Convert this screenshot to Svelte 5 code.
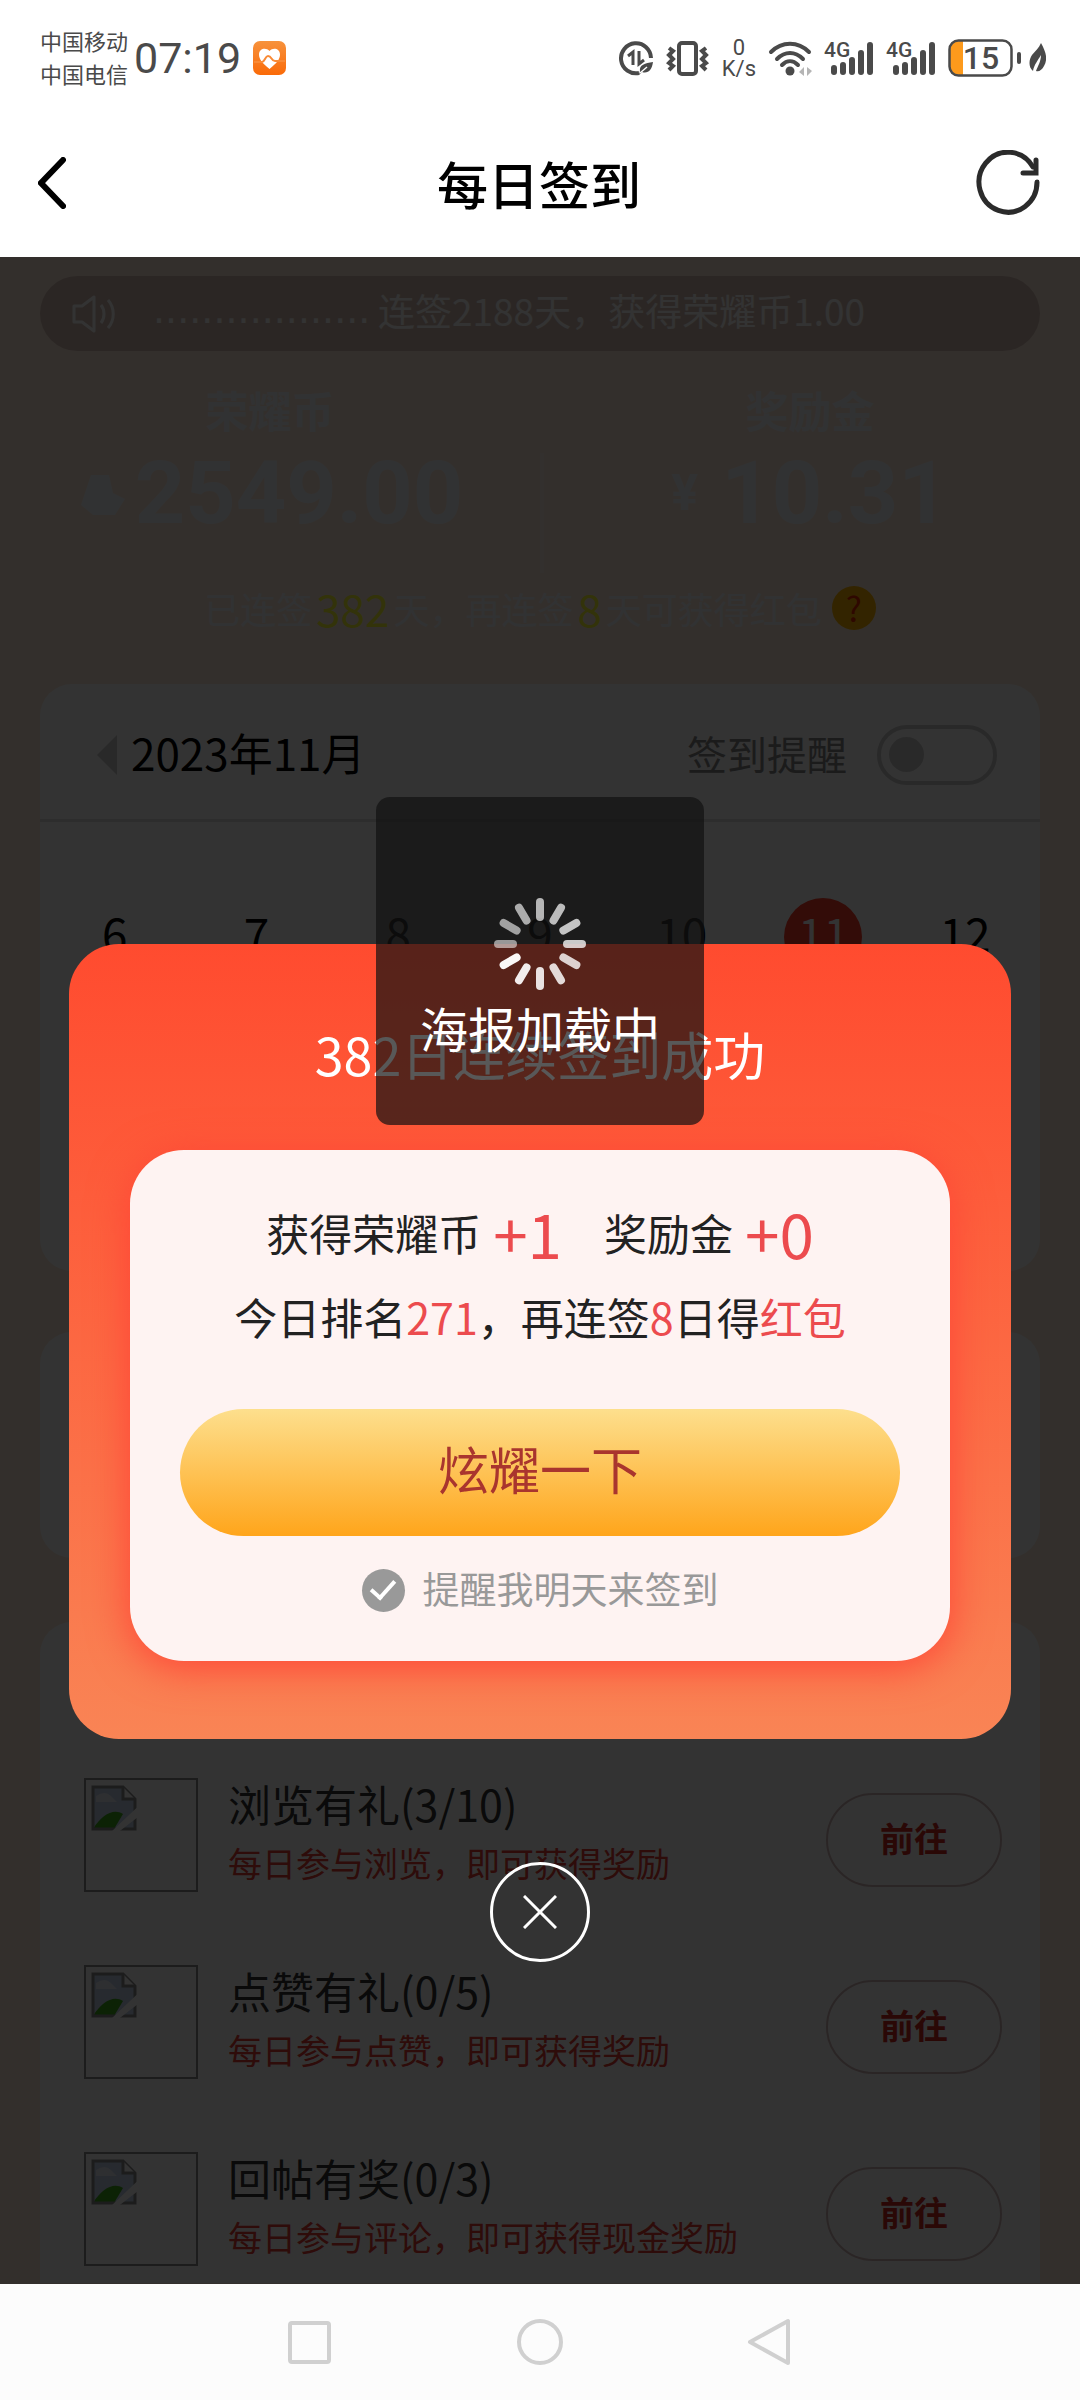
<script lang="ts">
  const notice = '连签2188天，获得荣耀币1.00';
  const days = [6, 7, 8, 9, 10, 11, 12];
  const today = 11;
  const tasks = [
    { name: '浏览有礼(3/10)', desc: '每日参与浏览，即可获得奖励' },
    { name: '点赞有礼(0/5)', desc: '每日参与点赞，即可获得奖励' },
    { name: '回帖有奖(0/3)', desc: '每日参与评论，即可获得现金奖励' }
  ];
  // opacity per spoke, clockwise from the top
  const spokes = [0.68, 0.71, 0.74, 0.77, 0.8, 0.83, 0.87, 0.92, 0.97, 0.55, 0.59, 0.64];

  let remind = $state(false);
  let remindTomorrow = $state(true);
</script>

{#snippet signal()}
  <svg class="signal" width="50" height="44" viewBox="0 -4 50 44" aria-hidden="true">
    <text class="net" x="0" y="17">4G</text>
    <g stroke="#4a4a4a" stroke-width="6" stroke-linecap="round">
      <path d="M10 28v4M19 25v7M28 20v12M37 13v19M46 5v27" />
    </g>
  </svg>
{/snippet}

<div class="page">
  <div class="status">
    <div class="carriers">
      <span>中国移动</span>
      <span>中国电信</span>
    </div>
    <span class="clock">07:19</span>
    <svg width="33" height="34" viewBox="0 0 33 34" aria-hidden="true">
      <defs>
        <linearGradient id="health" x1="0" y1="0" x2="0" y2="1">
          <stop offset="0" stop-color="#f7923c" />
          <stop offset="1" stop-color="#fa6a08" />
        </linearGradient>
      </defs>
      <rect width="33" height="34" rx="7" fill="url(#health)" />
      <path d="M16.500 28C9 22 6 18 6 13.500C6 7.500 13 6 16.500 10C20 6 27 7.500 27 13.500C27 18 24 22 16.500 28Z" fill="#fff" />
      <path d="M1 21H9C12 21 12 15 15 15C19 15 18 20 22 20H32" fill="none" stroke="#f98a35" stroke-width="2" />
    </svg>

    <div class="indicators">
      <svg width="36" height="36" viewBox="0 0 36 36" aria-hidden="true">
        <path d="M21 33A15 15 0 1 1 33 18" fill="none" stroke="#4a4a4a" stroke-width="4" />
        <path d="M10 16l5-4v13M21 11v13l5-4" fill="none" stroke="#4a4a4a" stroke-width="3" />
        <path d="M22 31C21 25 27 23 35 22C34 30 30 34 24 32L21 35Z" fill="#4a4a4a" />
        <path d="M22 33l7-6" stroke="#fff" stroke-width="1.500" />
      </svg>
      <svg width="44" height="36" viewBox="0 0 44 36" aria-hidden="true">
        <rect x="13" y="3" width="17" height="31" rx="3" fill="none" stroke="#4a4a4a" stroke-width="4" />
        <path d="M3 8l4 3-4 4 4 4-4 4 4 3-4 4M40 8l-4 3 4 4-4 4 4 4-4 3 4 4" fill="none" stroke="#4a4a4a" stroke-width="4" />
      </svg>
      <div class="speed">
        <span>0</span>
        <span>K/s</span>
      </div>
      <svg width="44" height="36" viewBox="0 0 44 36" aria-hidden="true">
        <g fill="none" stroke="#4a4a4a" stroke-width="4" stroke-linecap="round">
          <path d="M3 12C14 1 30 1 41 12" />
          <path d="M9 19C17 11 27 11 35 19" />
          <path d="M14 25C19 20 25 20 30 25" />
        </g>
        <circle cx="22" cy="31" r="4.500" fill="#4a4a4a" />
        <path d="M31 32l5-5v9M39 27v9l5-5" fill="#b5b5b5" />
      </svg>
      {@render signal()}
      {@render signal()}
      <svg width="73" height="38" viewBox="0 0 73 38" aria-hidden="true">
        <path d="M15 2H11A9 9 0 0 0 2 11V27A9 9 0 0 0 11 36H15Z" fill="#fd9a1c" />
        <rect x="1.500" y="1.500" width="62" height="35" rx="9" fill="none" stroke="#4a4a4a" stroke-width="2.500" />
        <rect x="69" y="13" width="4" height="12" rx="2" fill="#4a4a4a" />
        <text class="charge" x="33" y="30" text-anchor="middle">15</text>
      </svg>
      <svg class="leaf" width="17" height="30" viewBox="0 0 17 30" aria-hidden="true">
        <path d="M12 0C17 9 19 16 15 23C13 27 10 29 7 28C9 23 12 18 12 12C9 17 5 22 4 28C-1 24 0 16 3 12C6 8 10 5 12 0Z" fill="#4a4a4a" />
      </svg>
    </div>
  </div>

  <header class="header">
    <button class="icon-btn" aria-label="返回">
      <svg width="28" height="52" viewBox="0 0 28 52" aria-hidden="true">
        <path d="M25 3L3 26L25 49" fill="none" stroke="#000" stroke-width="6" stroke-linecap="round" />
      </svg>
    </button>
    <h1 class="title">每日签到</h1>
    <button class="icon-btn" aria-label="刷新">
      <svg width="64" height="66" viewBox="0 0 64 66" aria-hidden="true">
        <path d="M61 32A29 30 0 1 1 57 17" fill="none" stroke="#2b2b2b" stroke-width="5" stroke-linecap="round" />
        <path d="M60 10V23H47" fill="none" stroke="#2b2b2b" stroke-width="5" stroke-linecap="round" />
      </svg>
    </button>
  </header>

  <main class="main">
    <div class="notice">
      <svg width="44" height="40" viewBox="0 0 44 40" aria-hidden="true">
        <g fill="none" stroke="currentColor" stroke-width="3" stroke-linejoin="round">
          <path d="M2 12H10L22 3V37L10 28H2Z" />
          <path d="M29 11C33 16 33 24 29 29M36 6C43 14 43 26 36 34" />
        </g>
      </svg>
      <span class="dots">..................</span>
      <span class="notice-text">{notice}</span>
    </div>

    <section class="wallet">
      <div class="balance">
        <span class="label">荣耀币</span>
        <span class="amount">
          <svg width="50" height="52" viewBox="0 0 50 52" aria-hidden="true">
            <path d="M4 38L14 8H32L36 26L48 32L38 48H16Z" fill="currentColor" />
          </svg>
          2549.00
        </span>
      </div>
      <div class="balance">
        <span class="label">奖励金</span>
        <span class="amount"><small>¥</small>10.31</span>
      </div>
    </section>

    <p class="streak">
      已连签<b>382</b>天，再连签<b>8</b>天可获得红包
      <button class="help" aria-label="规则">?</button>
    </p>

    <section class="card calendar">
      <div class="month">
        <svg width="20" height="40" viewBox="0 0 20 40" aria-hidden="true">
          <path d="M20 0V40L0 20Z" fill="#cdcdcd" />
        </svg>
        <span>2023年11月</span>
        <label class="remind" for="remind">签到提醒</label>
        <input id="remind" class="switch" type="checkbox" bind:checked={remind} />
      </div>
      <div class="days">
        {#each days as day}
          <span class="day" class:today={day === today}>{day}</span>
        {/each}
      </div>
    </section>

    <section class="card banner"></section>

    <section class="card tasks">
      {#each tasks as task}
        <div class="task">
          <div class="thumb">
            <svg width="48" height="48" viewBox="0 0 16 16" aria-hidden="true">
              <path d="M1 1H11L15 5V15H1Z" fill="#c0cfe8" />
              <path d="M2 4Q5 2 7 4L9 6H2Z" fill="#e6ecf6" />
              <path d="M1 15C4 10 8 8 11 10L8 15Z" fill="#3fa81c" />
              <path d="M1 15V1H11L15 5V15Z" fill="none" stroke="#8c8c8c" />
              <path d="M11 1V5H15" fill="#fff" stroke="#8c8c8c" />
              <path d="M16 7.500L7 16H9.500L16 11Z" fill="#fff" />
            </svg>
          </div>
          <div class="info">
            <p class="name">{task.name}</p>
            <p class="desc">{task.desc}</p>
          </div>
          <button class="go">前往</button>
        </div>
      {/each}
    </section>

    <div class="mask">
      <div class="popup" role="dialog" aria-labelledby="popup-title">
        <h2 id="popup-title" class="popup-title">382日连续签到成功</h2>
        <div class="result">
          <p class="gain">
            <span>获得荣耀币</span><em>+1</em>
            <span class="second">奖励金</span><em>+0</em>
          </p>
          <p class="rank">今日排名<i>271</i>，再连签<i>8</i>日得<i>红包</i></p>
          <button class="share">炫耀一下</button>
          <label class="tomorrow">
            <input type="checkbox" bind:checked={remindTomorrow} />
            提醒我明天来签到
          </label>
        </div>
      </div>
      <button class="close" aria-label="关闭">
        <svg width="34" height="34" viewBox="0 0 34 34" aria-hidden="true">
          <path d="M1 1L33 33M33 1L1 33" stroke="#fff" stroke-width="3" />
        </svg>
      </button>
    </div>

    <div class="toast" role="status">
      <svg width="94" height="94" viewBox="-47 -47 94 94" aria-hidden="true">
        {#each spokes as opacity, i}
          <rect x="-4" y="-46" width="8" height="23" rx="4" fill="#fff" {opacity} transform="rotate({i * 30})" />
        {/each}
      </svg>
      <span>海报加载中</span>
    </div>
  </main>

  <nav class="navbar">
    <button class="nav-btn" aria-label="最近任务">
      <svg width="48" height="48" viewBox="0 0 48 48" aria-hidden="true">
        <rect x="4" y="5" width="39" height="39" rx="2" />
      </svg>
    </button>
    <button class="nav-btn" aria-label="主屏幕">
      <svg width="48" height="48" viewBox="0 0 48 48" aria-hidden="true">
        <circle cx="24" cy="24" r="21" />
      </svg>
    </button>
    <button class="nav-btn" aria-label="返回上级">
      <svg width="48" height="48" viewBox="0 0 48 48" aria-hidden="true">
        <path d="M42 3V45L4 24Z" stroke-linejoin="round" />
      </svg>
    </button>
  </nav>
</div>

<style>
  :global(body){
    margin:0;
    background:#fff;
  }
  .page{
    min-height:100vh;
    display:flex;
    flex-direction:column;
    font-family:"Noto Sans CJK SC", sans-serif;
    color:#333;
  }
  p, h1, h2{
    margin:0;
  }
  button{
    font-family:inherit;
    padding:0;
    border:none;
    background:none;
    cursor:pointer;
  }
  svg{
    display:block;
    flex:none;
  }

  .status{
    display:flex;
    align-items:center;
    height:116px;
    padding:0 34px 0 40px;
    box-sizing:border-box;
    color:#4a4a4a;
  }
  .carriers{
    display:flex;
    flex-direction:column;
    padding-bottom:2px;
    font-size:22px;
    line-height:33px;
  }
  .clock{
    margin:0 12px 0 6px;
    font-size:43px;
    line-height:48px;
    font-family:Roboto, sans-serif;
  }
  .indicators{
    margin-left:auto;
    display:flex;
    align-items:center;
    gap:12px;
  }
  .leaf{
    margin-left:-4px;
  }
  .speed{
    display:flex;
    flex-direction:column;
    align-items:center;
    font-family:Roboto, sans-serif;
    font-size:22px;
    line-height:21px;
  }
  .signal{
    overflow:visible;
  }
  .net{
    font:500 21px Roboto, sans-serif;
    fill:#4a4a4a;
  }
  .charge{
    font:500 32px Roboto, sans-serif;
    fill:#4a4a4a;
  }

  .header{
    display:flex;
    align-items:center;
    justify-content:space-between;
    height:141px;
    padding:0 40px 8px 38px;
    box-sizing:border-box;
  }
  .icon-btn{
    width:64px;
    display:flex;
  }
  .title{
    font-size:51px;
    line-height:72px;
    font-weight:500;
    color:#000;
  }

  .main{
    position:relative;
    flex:1;
    padding:19px 40px 0;
    background:#ffebdc;
  }
  .notice{
    display:flex;
    align-items:center;
    height:75px;
    padding:0 32px;
    border-radius:38px;
    background:#d7beb4;
    color:#fff;
    font-size:37px;
  }
  .dots{
    min-width:225px;
    margin-left:37px;
    padding-bottom:8px;
    font-size:38px;
    font-family:"DejaVu Sans", sans-serif;
  }
  .notice-text{
    padding-bottom:8px;
  }

  .wallet{
    display:grid;
    grid-template-columns:1fr 1fr;
    margin:0 -40px;
    padding-top:30px;
    color:#f6faff;
    font-weight:700;
  }
  .balance{
    display:flex;
    flex-direction:column;
    align-items:center;
  }
  .balance + .balance{
    background:linear-gradient(#fff0e6, #fff0e6) left bottom / 4px 120px no-repeat;
  }
  .label{
    font-size:43px;
    line-height:56px;
  }
  .amount{
    display:flex;
    align-items:center;
    gap:8px;
    font-family:Roboto, sans-serif;
    font-size:88px;
    line-height:112px;
    padding-bottom:24px;
  }
  .amount small{
    width:42px;
    font-size:50px;
  }
  .streak{
    display:flex;
    align-items:center;
    justify-content:center;
    height:60px;
    padding-top:5px;
    margin-bottom:46px;
    font-size:36px;
    color:#f6faff;
  }
  .streak b{
    margin:0 4px;
    font-size:44px;
    font-weight:400;
    color:#ffff32;
  }
  .help{
    width:44px;
    height:44px;
    margin-left:10px;
    border-radius:50%;
    background:#ffb400;
    color:#e62800;
    font-size:34px;
    line-height:44px;
  }

  .card{
    border-radius:32px;
    background:#fff;
  }
  .calendar{
    min-height:587px;
  }
  .month{
    display:flex;
    align-items:center;
    height:138px;
    padding:6px 43px 0 57px;
    box-sizing:border-box;
    border-bottom:3px solid #e0e0e0;
    font-size:44px;
    color:#000;
  }
  .month span{
    margin-left:14px;
    padding-bottom:6px;
  }
  .month .remind{
    margin:0 30px 0 auto;
    padding-bottom:4px;
    font-size:40px;
    color:#888;
  }
  .switch{
    appearance:none;
    display:flex;
    align-items:center;
    width:120px;
    height:60px;
    margin:0;
    padding:0 8px;
    box-sizing:border-box;
    border:4px solid #cdcdcd;
    border-radius:30px;
  }
  .switch::before{
    content:"";
    width:35px;
    height:35px;
    border-radius:50%;
    background:#cdcdcd;
  }
  .days{
    display:grid;
    grid-template-columns:repeat(7, 1fr);
    justify-items:center;
    padding:76px 4px 0;
  }
  .day{
    width:78px;
    height:78px;
    border-radius:50%;
    font-size:46px;
    line-height:68px;
    text-align:center;
    color:#000;
  }
  .today{
    background:#ff3c28;
    color:#fff;
  }
  .banner{
    min-height:226px;
    margin-top:61px;
  }
  .tasks{
    display:flex;
    flex-direction:column;
    gap:73px;
    margin-top:64px;
    padding:156px 38px 17px 44px;
    border-radius:32px 32px 0 0;
  }
  .task{
    display:flex;
    align-items:center;
  }
  .thumb{
    width:114px;
    height:114px;
    padding:4px;
    box-sizing:border-box;
    border:2px solid #8c8c8c;
  }
  .info{
    margin-left:30px;
  }
  .name{
    font-size:43px;
    line-height:50px;
    padding-bottom:6px;
  }
  .desc{
    font-size:34px;
    line-height:58px;
    color:#e63c32;
  }
  .go{
    width:176px;
    height:94px;
    margin:10px 0 0 auto;
    padding-bottom:6px;
    border:2px solid #d2b9b9;
    border-radius:47px;
    font-size:34px;
    font-weight:700;
    color:#d2281e;
  }

  .mask{
    position:absolute;
    inset:0;
    display:flex;
    flex-direction:column;
    align-items:center;
    padding:687px 69px 0;
    background:rgba(0,0,0,0.8);
  }
  .popup{
    align-self:stretch;
    padding:70px 61px 78px;
    border-radius:50px;
    background:linear-gradient(#ff4b2f, #f98455);
    text-align:center;
  }
  .popup-title{
    margin-bottom:56px;
    font-size:52px;
    line-height:80px;
    font-weight:400;
    color:#fff;
  }
  .result{
    padding:42px 50px 43px;
    border-radius:54px;
    background:#fef3f2;
    box-shadow:0 6px 40px #ff4436;
    font-size:43px;
    color:#222;
  }
  .gain{
    display:flex;
    align-items:center;
    justify-content:center;
    line-height:80px;
  }
  .gain em{
    margin-left:12px;
    font-size:62px;
    font-style:normal;
    color:#ec4b4e;
  }
  .second{
    margin-left:42px;
  }
  .rank{
    margin:4px 0 53px;
    line-height:80px;
  }
  .rank i{
    font-style:normal;
    color:#ec4b4e;
  }
  .share{
    width:100%;
    height:127px;
    padding-bottom:10px;
    border-radius:64px;
    background:linear-gradient(#fddf8d, #ffa51b);
    font-size:51px;
    color:#a9352e;
  }
  .tomorrow{
    display:flex;
    align-items:center;
    justify-content:center;
    gap:18px;
    margin-top:22px;
    font-size:37px;
    line-height:60px;
    color:#999;
  }
  .tomorrow input{
    appearance:none;
    display:grid;
    place-items:center;
    width:43px;
    height:43px;
    margin:4px 0 0;
    border-radius:50%;
    background:#999;
  }
  .tomorrow input:checked::after{
    content:"";
    width:10px;
    height:20px;
    margin-bottom:6px;
    border:solid #fff;
    border-width:0 4px 4px 0;
    transform:rotate(42deg);
  }
  .close{
    display:grid;
    place-items:center;
    width:100px;
    height:100px;
    margin-top:123px;
    border:3px solid #fff;
    border-radius:50%;
  }
  .toast{
    position:absolute;
    top:540px;
    left:50%;
    width:328px;
    height:328px;
    margin-left:-164px;
    padding-top:100px;
    box-sizing:border-box;
    display:flex;
    flex-direction:column;
    align-items:center;
    border-radius:14px;
    background:rgba(17,17,17,0.7);
    font-size:48px;
    line-height:72px;
    color:#fff;
  }

  .navbar{
    display:flex;
    align-items:center;
    justify-content:center;
    gap:182px;
    height:116px;
    background:#fcfcfc;
  }
  .nav-btn{
    display:flex;
  }
  .nav-btn svg{
    fill:none;
    stroke:#d0d0d0;
    stroke-width:4px;
  }
</style>
